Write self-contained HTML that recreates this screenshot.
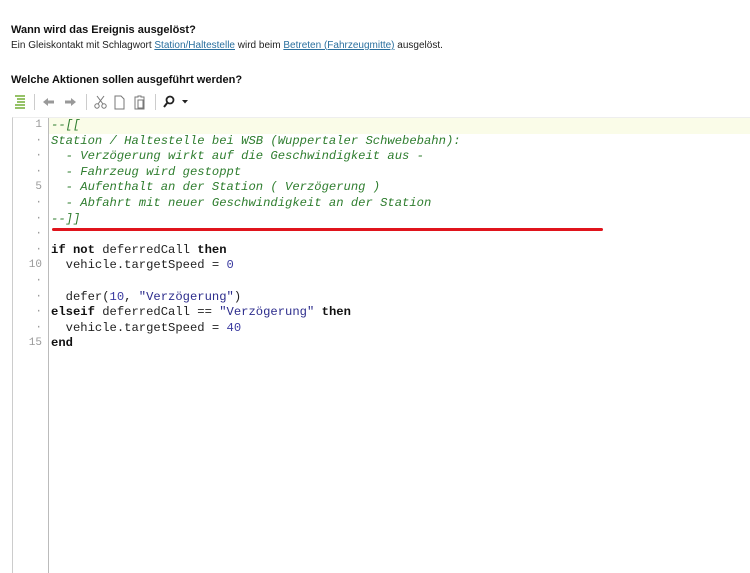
<!DOCTYPE html>
<html><head><meta charset="utf-8"><style>
body{margin:0;width:750px;height:573px;background:#fff;position:relative;overflow:hidden;font-family:"Liberation Sans",sans-serif;}
.h{position:absolute;left:11px;font-size:11px;font-weight:bold;color:#111;}
.t{position:absolute;left:11px;top:40px;font-size:10px;color:#222;}
.t a{color:#2a6f9e;text-decoration:underline;}
.ed{position:absolute;left:12px;top:117px;right:0;bottom:0;border-left:1px solid #ccc;border-top:1px solid #eee;}
.gut{position:absolute;left:48px;top:118px;bottom:0;border-left:1px solid #bbb;}
.hl{position:absolute;left:49px;top:118px;right:0;height:16px;background:#fafce8;}
.nums{position:absolute;left:14px;top:118px;width:28px;text-align:right;font:11px/15.6px "Liberation Mono",monospace;color:#999;}
.code{position:absolute;left:51px;top:118px;font:12.2px/15.6px "Liberation Mono",monospace;color:#222;white-space:pre;}
.c{color:#2e7d2e;font-style:italic;}
.k{font-weight:bold;color:#111;}
.n{color:#3a3aa0;}
.s{color:#2c2c8c;}
.red{position:absolute;left:52px;top:228px;width:551px;height:3px;background:#e0141c;border-radius:2px;}
.sep{position:absolute;top:94px;width:1px;height:16px;background:#ccc;}
</style></head><body>
<div class="h" style="top:24px">Wann wird das Ereignis ausgelöst?</div>
<div class="t">Ein Gleiskontakt mit Schlagwort <a>Station/Haltestelle</a> wird beim <a>Betreten (Fahrzeugmitte)</a> ausgelöst.</div>
<div class="h" style="top:74px">Welche Aktionen sollen ausgeführt werden?</div>
<svg style="position:absolute;left:12px;top:93px" width="185" height="18">
<g stroke="#7cb342" stroke-width="1.6"><line x1="3" y1="3" x2="13" y2="3"/><line x1="5" y1="6" x2="13" y2="6"/><line x1="5" y1="9" x2="13" y2="9"/><line x1="3" y1="12" x2="13" y2="12"/><line x1="3" y1="15" x2="13" y2="15"/></g>
<path d="M31 9l5-4v2.5h6v3h-6V13z" fill="#999"/>
<path d="M64 9l-5-4v2.5h-6v3h6V13z" fill="#999"/>
<g stroke="#777" fill="none" stroke-width="1"><circle cx="85" cy="13" r="2.2"/><circle cx="92" cy="13" r="2.2"/><line x1="86" y1="11" x2="92" y2="3"/><line x1="91" y1="11" x2="85" y2="3"/>
<path d="M103 3h6l3 3v10h-9z"/><path d="M123 4h3v-1h3v1h3v12h-9z"/><rect x="126" y="7" width="5" height="8"/></g>
<circle cx="158" cy="7" r="3.5" stroke="#222" stroke-width="1.8" fill="none"/><line x1="155.5" y1="9.5" x2="152" y2="14" stroke="#222" stroke-width="2"/>
<path d="M170 7h6l-3 3.5z" fill="#222"/>
</svg>
<div class="sep" style="left:34px"></div><div class="sep" style="left:86px"></div><div class="sep" style="left:155px"></div>
<div class="ed"></div>
<div class="hl"></div>
<div class="gut"></div>
<div class="nums">1<br>·<br>·<br>·<br>5<br>·<br>·<br>·<br>·<br>10<br>·<br>·<br>·<br>·<br>15</div>
<div class="code"><span class="c">--[[
Station / Haltestelle bei WSB (Wuppertaler Schwebebahn):
  - Verzögerung wirkt auf die Geschwindigkeit aus -
  - Fahrzeug wird gestoppt
  - Aufenthalt an der Station ( Verzögerung )
  - Abfahrt mit neuer Geschwindigkeit an der Station
--]]</span>

<span class="k">if not</span> deferredCall <span class="k">then</span>
  vehicle.targetSpeed = <span class="n">0</span>

  defer(<span class="n">10</span>, <span class="s">"Verzögerung"</span>)
<span class="k">elseif</span> deferredCall == <span class="s">"Verzögerung"</span> <span class="k">then</span>
  vehicle.targetSpeed = <span class="n">40</span>
<span class="k">end</span></div>
<div class="red"></div>
</body></html>
